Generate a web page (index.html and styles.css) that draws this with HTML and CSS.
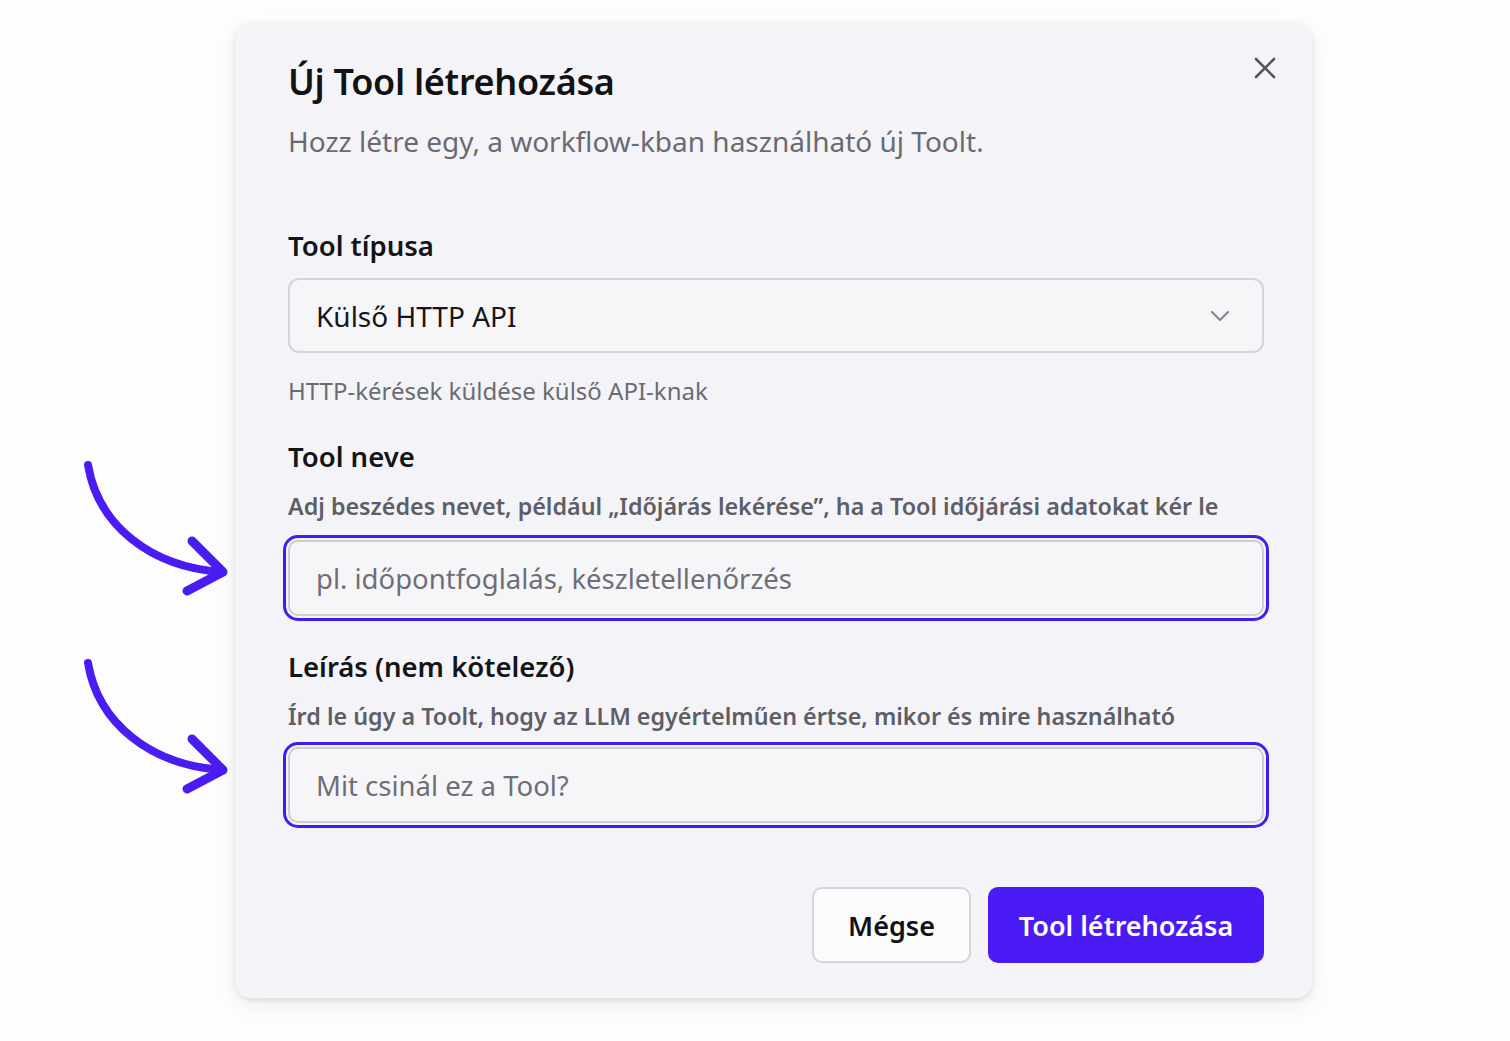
FILE: index.html
```html
<!DOCTYPE html>
<html lang="hu">
<head>
<meta charset="utf-8">
<title>Új Tool létrehozása</title>
<link rel="stylesheet" href="styles.css">
</head>
<body>
<div class="stage">
  <svg class="arrow arrow-1" viewBox="0 0 160 150" width="160" height="150" aria-hidden="true">
    <path d="M8 10 C 18 70, 70 112, 142 117" fill="none" stroke="#4a1cf3" stroke-width="8" stroke-linecap="round"/>
    <path d="M112 86 L143 117 L107 136" fill="none" stroke="#4a1cf3" stroke-width="9" stroke-linecap="round" stroke-linejoin="round"/>
  </svg>
  <svg class="arrow arrow-2" viewBox="0 0 160 150" width="160" height="150" aria-hidden="true">
    <path d="M8 10 C 18 70, 70 112, 142 117" fill="none" stroke="#4a1cf3" stroke-width="8" stroke-linecap="round"/>
    <path d="M112 86 L143 117 L107 136" fill="none" stroke="#4a1cf3" stroke-width="9" stroke-linecap="round" stroke-linejoin="round"/>
  </svg>

  <div class="modal">
    <button class="close" aria-label="Bezárás">
      <svg viewBox="0 0 24 24" width="24" height="24"><path d="M3 3 L21 21 M21 3 L3 21" stroke="#55555c" stroke-width="2.6" stroke-linecap="round"/></svg>
    </button>
    <h1 class="title">Új Tool létrehozása</h1>
    <p class="subtitle">Hozz létre egy, a workflow-kban használható új Toolt.</p>

    <div class="field field-type">
      <div class="label">Tool típusa</div>
      <div class="select">
        <span>Külső HTTP API</span>
        <svg viewBox="0 0 20 12" width="20" height="12"><path d="M2 2 L10 10 L18 2" fill="none" stroke="#86868e" stroke-width="2.2" stroke-linecap="round" stroke-linejoin="round"/></svg>
      </div>
      <div class="helper">HTTP-kérések küldése külső API-knak</div>
    </div>

    <div class="field field-name">
      <div class="label">Tool neve</div>
      <div class="desc">Adj beszédes nevet, például „Időjárás lekérése”, ha a Tool időjárási adatokat kér le</div>
      <div class="input focus">pl. időpontfoglalás, készletellenőrzés</div>
    </div>

    <div class="field field-descr">
      <div class="label">Leírás (nem kötelező)</div>
      <div class="desc">Írd le úgy a Toolt, hogy az LLM egyértelműen értse, mikor és mire használható</div>
      <div class="input focus">Mit csinál ez a Tool?</div>
    </div>

    <div class="actions">
      <button class="btn btn-secondary">Mégse</button>
      <button class="btn btn-primary">Tool létrehozása</button>
    </div>
  </div>
</div>
</body>
</html>
```

FILE: styles.css
```css
* { box-sizing: border-box; }

html, body {
  margin: 0;
  padding: 0;
  background: #fdfdfe;
  font-family: "Noto Sans", "Open Sans", "Liberation Sans", sans-serif;
}

.stage {
  position: relative;
  width: 1510px;
  height: 1041px;
  padding: 23px 0 0 235px;
}

.arrow {
  position: absolute;
  left: 80px;
}
.arrow-1 { top: 455px; }
.arrow-2 { top: 653px; }

.modal {
  position: relative;
  width: 1077px;
  height: 975px;
  background: #f4f4f8;
  border-radius: 16px;
  box-shadow: 0 2px 6px rgba(0,0,0,0.10), 0 8px 24px rgba(0,0,0,0.06);
  padding: 37px 48px 35px 53px;
  display: flex;
  flex-direction: column;
}

.close {
  position: absolute;
  right: 35px;
  top: 33px;
  background: none;
  border: 0;
  padding: 0;
  width: 24px;
  height: 24px;
  cursor: pointer;
}
.close svg { display: block; }

.title {
  margin: 0;
  font-size: 36px;
  line-height: 44px;
  font-weight: 600;
  color: #121214;
  letter-spacing: -0.3px;
}

.subtitle {
  margin: 19px 0 0;
  font-size: 28px;
  line-height: 36px;
  color: #6a6a73;
  font-weight: 400;
}

.field { display: flex; flex-direction: column; }
.field-type { margin-top: 69px; }
.field-name { margin-top: 32px; }
.field-descr { margin-top: 33px; }

.label {
  font-size: 27.5px;
  line-height: 36px;
  font-weight: 600;
  color: #141416;
}

.select {
  margin-top: 14px;
  height: 75px;
  border: 2px solid #d4d4da;
  border-radius: 11px;
  background: #f6f6f9;
  display: flex;
  align-items: center;
  justify-content: space-between;
  padding: 0 32px 0 26px;
  font-size: 28px;
  color: #161618;
}
.select svg { display: block; }

.helper {
  margin-top: 22px;
  font-size: 24px;
  line-height: 32px;
  color: #6b6b73;
}

.desc {
  margin-top: 15px;
  font-size: 23.3px;
  line-height: 32px;
  font-weight: 600;
  color: #5e5e66;
}

.input {
  margin-top: 18px;
  height: 76px;
  border: 2px solid #cdcdd4;
  border-radius: 10px;
  background: #f6f6f9;
  display: flex;
  align-items: center;
  padding: 0 26px;
  font-size: 27.5px;
  color: #6e6e77;
}
.field-descr .input { margin-top: 15px; }

.input.focus {
  box-shadow: 0 0 0 2px #f4f4f8, 0 0 0 5px #3d1ef0;
}

.actions {
  margin-top: auto;
  display: flex;
  justify-content: flex-end;
  gap: 17px;
}

.btn {
  height: 76px;
  border-radius: 10px;
  font-family: inherit;
  font-size: 27px;
  font-weight: 600;
  cursor: pointer;
}
.btn-secondary {
  width: 159px;
  background: #fbfbfc;
  border: 2px solid #d4d4da;
  color: #111;
}
.btn-primary {
  width: 276px;
  background: #4a1bf5;
  border: 0;
  color: #fff;
}
```
